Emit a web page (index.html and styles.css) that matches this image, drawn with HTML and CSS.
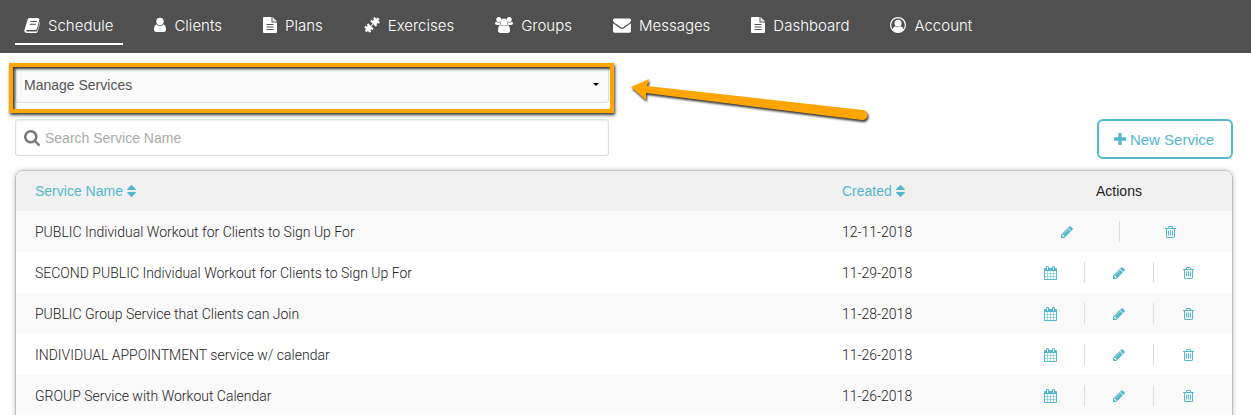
FILE: index.html
```html
<!DOCTYPE html>
<html lang="en">
<head>
  <meta charset="UTF-8" />
  <meta name="viewport" content="width=device-width, initial-scale=1.0" />
  <title>Manage Services</title>
  <link rel="stylesheet" href="styles.css">
</head>
<body>
  <!-- Icon set -->
  <svg class="sprite" aria-hidden="true">
    <symbol id="i-book" viewBox="0 0 16 16">
      <path fill-rule="evenodd" d="M5.6 1h8.2q1.9.2 1.5 1.900l-2.500 9q-.3 1.100-1.500 1.100H3.200q-1 0-1.200.7.1.700 1.200.700h8.900q1 0 1.300-1l2.300-8.600q.5.600.2 1.500l-2.200 8.200q-.4 1.500-2 1.500H2.600Q.300 15.600.300 13.400L3.600 2.500Q4.100 1 5.600 1zM6.500 4l-.3 1h6.500l.3-1zm-.8 2.800-.3 1h6.500l.3-1z"/>
    </symbol>
    <symbol id="i-user" viewBox="0 0 12 16">
      <path d="M6 .8a3.700 3.700 0 0 1 3.700 3.700A3.700 3.700 0 0 1 6 8.400 3.700 3.700 0 0 1 2.300 4.500 3.700 3.700 0 0 1 6 .8zM2.600 7.400Q4 9.200 6 9.200t3.400-1.800Q12 8 12 12.500 12 15 9.800 15H2.200Q0 15 0 12.500 0 8 2.600 7.400z"/>
    </symbol>
    <symbol id="i-file" viewBox="0 0 14 16">
      <path fill-rule="evenodd" d="M1 0h7.500v5.500H14V15q0 1-1 1H1q-1 0-1-1V1q0-1 1-1zM3.500 7v1h7V7zm0 2.500v1h7v-1zm0 2.500v1h7v-1z"/>
      <path d="M9.500 0 14 4.500H9.500z"/>
    </symbol>
    <symbol id="i-dumbbell" viewBox="0 0 14 14">
      <path d="M8 1.200 9.200 0l1.600 1.500L12 .4 13.600 2l-1.100 1.200L14 4.800 12.800 6l-.9-.8-1.100 1.100.8.900-1.300 1.300-2.100-2.100-1.800 1.800 2.100 2.100-1.300 1.300-.9-.8-.8.800.8.900L5 13.800l-1.600-1.600-1.200 1.100L.6 11.800l1.200-1.200L.2 9l1.300-1.300.9.8.8-.8-.8-.9 1.300-1.300 2.100 2.100 1.800-1.800-2.100-2.100L6.800 2.400l.9.900 1.100-1.200z"/>
    </symbol>
    <symbol id="i-group" viewBox="0 0 18 16">
      <circle cx="3.800" cy="2.500" r="2.500"/>
      <circle cx="14.200" cy="2.500" r="2.500"/>
      <circle cx="9" cy="5.200" r="3.600"/>
      <path d="M1.500 4.700Q3 6 4.800 5.300 4.900 7 5.700 8H3.500Q0 8.200 0 6.500q0-1.700 1.500-1.800zM16.500 4.700Q15 6 13.200 5.300 13.100 7 12.300 8h2.200Q18 8.200 18 6.500q0-1.700-1.500-1.800zM5.600 8q1.500 1.300 3.400 1.300T12.400 8Q15 8.600 15 13.300 15 16 12.500 16h-7Q3 16 3 13.300 3 8.600 5.600 8z"/>
    </symbol>
    <symbol id="i-envelope" viewBox="0 128 1792 1536">
      <path d="M1792 710v794q0 66-47 113t-113 47h-1472q-66 0-113-47t-47-113v-794q44 49 101 87 362 246 497 345 57 42 92.500 65.500t94.500 48 110 24.500h2q51 0 110-24.500t94.500-48 92.500-65.500q170-123 498-345 57-39 100-87zm0-294q0 79-49 151t-122 123q-376 261-468 325-10 7-42.500 31t-54 38.500-52 32.500-57.500 27-50 9h-2q-23 0-50-9t-57.500-27-52-32.500-54-38.500-42.500-31q-91-64-262-182.500t-205-142.500q-62-42-117-115.500t-55-136.500q0-78 41.500-130t118.500-52h1472q65 0 112.500 47t47.500 113z"/>
    </symbol>
    <symbol id="i-account" viewBox="0 0 16 16">
      <circle cx="8" cy="8" r="7.400" fill="none" stroke="currentColor" stroke-width="1.200"/>
      <circle cx="8" cy="6.300" r="3.500"/>
      <path d="M5.200 9.200Q8 11.400 10.800 9.200q2.200.6 2.600 3.200Q11.400 15.300 8 15.300T2.600 12.400Q3 9.800 5.200 9.200z"/>
    </symbol>
    <symbol id="i-search" viewBox="64 128 1664 1664">
      <path d="M1216 832q0-185-131.500-316.500t-316.500-131.500-316.500 131.500-131.500 316.500 131.500 316.500 316.500 131.500 316.500-131.500 131.500-316.500zm512 832q0 52-38 90t-90 38q-54 0-90-38l-343-342q-179 124-399 124-143 0-273.500-55.500t-225-150-150-225-55.500-273.500 55.500-273.500 150-225 225-150 273.500-55.500 273.500 55.500 225 150 150 225 55.500 273.500q0 220-124 399l343 343q37 37 37 90z"/>
    </symbol>
    <symbol id="i-plus" viewBox="192 128 1408 1408">
      <path d="M1600 736v192q0 40-28 68t-68 28h-416v416q0 40-28 68t-68 28h-192q-40 0-68-28t-28-68v-416h-416q-40 0-68-28t-28-68v-192q0-40 28-68t68-28h416v-416q0-40 28-68t68-28h192q40 0 68 28t28 68v416h416q40 0 68 28t28 68z"/>
    </symbol>
    <symbol id="i-sort" viewBox="384 192 1024 1408">
      <path d="M1408 1088q0 26-19 45l-448 448q-19 19-45 19t-45-19l-448-448q-19-19-19-45t19-45 45-19h896q26 0 45 19t19 45zm0-384q0 26-19 45t-45 19h-896q-26 0-45-19t-19-45 19-45l448-448q19-19 45-19t45 19l448 448q19 19 19 45z"/>
    </symbol>
    <symbol id="i-calendar" viewBox="64 0 1664 1792">
      <path d="M192 1664h288v-288h-288v288zm352 0h320v-288h-320v288zm-352-352h288v-320h-288v320zm352 0h320v-320h-320v320zm-352-384h288v-288h-288v288zm736 736h320v-288h-320v288zm-384-736h320v-288h-320v288zm768 736h288v-288h-288v288zm-384-352h320v-320h-320v320zm-352-864v-288q0-13-9.500-22.500t-22.500-9.500h-64q-13 0-22.500 9.500t-9.500 22.500v288q0 13 9.500 22.500t22.500 9.500h64q13 0 22.500-9.500t9.500-22.500zm736 864h288v-320h-288v320zm-384-384h320v-288h-320v288zm384 0h288v-288h-288v288zm32-480v-288q0-13-9.500-22.500t-22.500-9.500h-64q-13 0-22.500 9.500t-9.500 22.500v288q0 13 9.500 22.500t22.500 9.500h64q13 0 22.500-9.500t9.500-22.500zm384-64v1280q0 52-38 90t-90 38h-1408q-52 0-90-38t-38-90v-1280q0-52 38-90t90-38h128v-96q0-66 47-113t113-47h64q66 0 113 47t47 113v96h384v-96q0-66 47-113t113-47h64q66 0 113 47t47 113v96h128q52 0 90 38t38 90z"/>
    </symbol>
    <symbol id="i-pencil" viewBox="128 128 1536 1536">
      <path d="M491 1536l91-91-235-235-91 91v107h128v128h107zm523-928q0-22-22-22-10 0-17 7l-542 542q-7 7-7 17 0 22 22 22 10 0 17-7l542-542q7-7 7-17zm-54-192l416 416-832 832h-416v-416zm683 96q0 53-37 90l-166 166-416-416 166-165q36-38 90-38 53 0 91 38l235 234q37 39 37 91z"/>
    </symbol>
    <symbol id="i-trash" viewBox="192 128 1408 1536">
      <path d="M704 736v576q0 14-9 23t-23 9h-64q-14 0-23-9t-9-23v-576q0-14 9-23t23-9h64q14 0 23 9t9 23zm256 0v576q0 14-9 23t-23 9h-64q-14 0-23-9t-9-23v-576q0-14 9-23t23-9h64q14 0 23 9t9 23zm256 0v576q0 14-9 23t-23 9h-64q-14 0-23-9t-9-23v-576q0-14 9-23t23-9h64q14 0 23 9t9 23zm128 724v-948h-896v948q0 22 7 40.500t14.500 27 10.500 8.500h832q3 0 10.500-8.500t14.500-27 7-40.500zm-672-1076h448l-48-117q-7-9-17-11h-317q-10 2-17 11zm928 32v64q0 14-9 23t-23 9h-96v948q0 83-47 143.500t-113 60.500h-832q-66 0-113-58.500t-47-141.500v-952h-96q-14 0-23-9t-9-23v-64q0-14 9-23t23-9h309l70-167q15-37 54-63t79-26h320q40 0 79 26t54 63l70 167h309q14 0 23 9t9 23z"/>
    </symbol>
  </svg>

  <nav class="navbar">
    <a class="nav-link active" href="#"><svg class="icon-16"><use href="#i-book"/></svg>Schedule</a>
    <a class="nav-link" href="#"><svg class="icon-12"><use href="#i-user"/></svg>Clients</a>
    <a class="nav-link" href="#"><svg class="icon-14"><use href="#i-file"/></svg>Plans</a>
    <a class="nav-link" href="#"><svg class="icon-16"><use href="#i-dumbbell"/></svg>Exercises</a>
    <a class="nav-link" href="#"><svg class="icon-18"><use href="#i-group"/></svg>Groups</a>
    <a class="nav-link" href="#"><svg class="icon-18"><use href="#i-envelope"/></svg>Messages</a>
    <a class="nav-link" href="#"><svg class="icon-14"><use href="#i-file"/></svg>Dashboard</a>
    <a class="nav-link" href="#"><svg class="icon-16"><use href="#i-account"/></svg>Account</a>
  </nav>

  <main class="content">
    <div class="view-picker">
      <select class="view-select" aria-label="View">
        <option>Manage Services</option>
      </select>
      <svg class="caret" viewBox="0 0 6 3"><path d="M0 0h6L3 3z"/></svg>
      <div class="highlight"></div>
      <svg class="arrow" viewBox="0 0 244 50">
        <path d="M2 12 20 4l-2 7 216 24a5 5 0 0 1-1 10L17 18v7z"/>
      </svg>
    </div>

    <div class="toolbar">
      <div class="search">
        <svg class="search-icon"><use href="#i-search"/></svg>
        <input class="search-input" type="text" placeholder="Search Service Name" aria-label="Search Service Name">
      </div>
      <button class="new-btn" type="button"><svg><use href="#i-plus"/></svg>New Service</button>
    </div>

    <div class="table-box">
      <table class="services">
        <thead>
          <tr>
            <th><a href="#">Service Name <svg><use href="#i-sort"/></svg></a></th>
            <th class="col-date"><a href="#">Created <svg><use href="#i-sort"/></svg></a></th>
            <th class="col-actions">Actions</th>
          </tr>
        </thead>
        <tbody>
          <tr>
            <td>PUBLIC Individual Workout for Clients to Sign Up For</td>
            <td>12-11-2018</td>
            <td>
              <div class="actions">
                <button aria-label="Edit"><svg class="icon-12"><use href="#i-pencil"/></svg></button>
                <button aria-label="Delete"><svg class="icon-11"><use href="#i-trash"/></svg></button>
              </div>
            </td>
          </tr>
          <tr>
            <td>SECOND PUBLIC Individual Workout for Clients to Sign Up For</td>
            <td>11-29-2018</td>
            <td>
              <div class="actions">
                <button aria-label="Calendar"><svg class="icon-13"><use href="#i-calendar"/></svg></button>
                <button aria-label="Edit"><svg class="icon-12"><use href="#i-pencil"/></svg></button>
                <button aria-label="Delete"><svg class="icon-11"><use href="#i-trash"/></svg></button>
              </div>
            </td>
          </tr>
          <tr>
            <td>PUBLIC Group Service that Clients can Join</td>
            <td>11-28-2018</td>
            <td>
              <div class="actions">
                <button aria-label="Calendar"><svg class="icon-13"><use href="#i-calendar"/></svg></button>
                <button aria-label="Edit"><svg class="icon-12"><use href="#i-pencil"/></svg></button>
                <button aria-label="Delete"><svg class="icon-11"><use href="#i-trash"/></svg></button>
              </div>
            </td>
          </tr>
          <tr>
            <td>INDIVIDUAL APPOINTMENT service w/ calendar</td>
            <td>11-26-2018</td>
            <td>
              <div class="actions">
                <button aria-label="Calendar"><svg class="icon-13"><use href="#i-calendar"/></svg></button>
                <button aria-label="Edit"><svg class="icon-12"><use href="#i-pencil"/></svg></button>
                <button aria-label="Delete"><svg class="icon-11"><use href="#i-trash"/></svg></button>
              </div>
            </td>
          </tr>
          <tr>
            <td>GROUP Service with Workout Calendar</td>
            <td>11-26-2018</td>
            <td>
              <div class="actions">
                <button aria-label="Calendar"><svg class="icon-13"><use href="#i-calendar"/></svg></button>
                <button aria-label="Edit"><svg class="icon-12"><use href="#i-pencil"/></svg></button>
                <button aria-label="Delete"><svg class="icon-11"><use href="#i-trash"/></svg></button>
              </div>
            </td>
          </tr>
        </tbody>
      </table>
    </div>
  </main>
</body>
</html>
```
FILE: styles.css
```css
* {
  box-sizing: border-box;
}

body {
  margin: 0;
  font-family: Roboto, "Liberation Sans", sans-serif;
  font-size: 14px;
  font-weight: 300;
  line-height: 20px;
  color: #222;
  background: #fff;
  overflow: hidden;
}

.sprite {
  display: none;
}

svg {
  fill: currentColor;
}

.icon-11 { width: 11px; height: 12px; }
.icon-12 { width: 12px; height: 12px; }
.icon-13 { width: 13px; height: 14px; }
.icon-14 { width: 14px; height: 16px; }
.icon-16 { width: 16px; height: 16px; }
.icon-18 { width: 18px; height: 16px; }

/* Top navigation */
.navbar {
  display: flex;
  gap: 22px;
  padding: 8px 15px;
  background: #505050;
}

.nav-link {
  display: flex;
  align-items: center;
  gap: 8px;
  height: 37px;
  padding: 0 10px 0 9px;
  border-bottom: 2px solid transparent;
  color: #fff;
  font-family: Inter, "Liberation Sans", sans-serif;
  font-size: 15px;
  text-decoration: none;
}

.nav-link.active {
  border-bottom-color: #fff;
}

.nav-link svg {
  height: 16px;
  margin-bottom: 2px;
}

.nav-link [href="#i-dumbbell"] {
  transform-origin: center;
}

.content {
  padding: 14px 18px 0 15px;
}

/* View drop-down */
.view-picker {
  position: relative;
  width: calc(50% - 15px);
}

.view-select {
  display: block;
  width: 100%;
  height: 36px;
  padding: 0 8px;
  appearance: none;
  border: 1px solid #ddd;
  border-radius: 3px;
  background: #fafafa;
  font-family: "Liberation Sans", sans-serif;
  font-size: 14px;
  color: #555;
}

.caret {
  position: absolute;
  top: 16px;
  right: 10px;
  width: 6px;
  height: 3px;
  fill: #000;
}

.highlight {
  position: absolute;
  inset: -4px -5px -10px -6px;
  border: 4px solid #ffa500;
  box-shadow: 1px 2px 3px rgba(0, 0, 0, 0.8), inset 2px 2px 3px rgba(0, 0, 0, 0.8);
  pointer-events: none;
}

.arrow {
  position: absolute;
  top: 8px;
  left: calc(100% + 20px);
  width: 244px;
  height: 50px;
  fill: #ffa500;
  filter: drop-shadow(1px 2px 1px rgba(0, 0, 0, 0.8));
}

/* Search and new service */
.toolbar {
  display: flex;
  justify-content: space-between;
  align-items: flex-start;
  margin: 16px 0 11px;
}

.search {
  position: relative;
  width: calc(50% - 15px);
}

.search-icon {
  position: absolute;
  top: 11px;
  left: 9px;
  width: 16px;
  height: 16px;
  color: #777;
}

.search-input {
  display: block;
  width: 100%;
  height: 37px;
  padding: 0 10px 0 29px;
  border: 1px solid #ddd;
  border-radius: 3px;
  box-shadow: inset 0 1px 2px rgba(0, 0, 0, 0.08);
  font-family: "Liberation Sans", sans-serif;
  font-size: 14px;
}

.search-input::placeholder {
  color: #aaa;
}

.new-btn {
  display: flex;
  align-items: center;
  justify-content: center;
  gap: 4px;
  width: 136px;
  height: 40px;
  padding: 0 2px 0 0;
  border: 2px solid #53b8cd;
  border-radius: 6px;
  background: #fff;
  color: #53b8cd;
  font-family: "Liberation Sans", sans-serif;
  font-size: 15px;
}

.new-btn svg {
  width: 12px;
  height: 12px;
}

/* Services table */
.table-box {
  border: 1px solid #bbc1c6;
  border-radius: 8px 8px 0 0;
  box-shadow: 0 0 4px rgba(0, 0, 0, 0.25);
  overflow: hidden;
}

.services {
  width: 100%;
  border-collapse: collapse;
  table-layout: fixed;
}

.services th,
.services td {
  height: 41px;
  padding: 0 10px 0 19px;
  text-align: left;
}

.services th {
  height: 40px;
  background: #f1f1f1;
  font-family: "Liberation Sans", sans-serif;
  font-weight: 400;
}

.services th a {
  color: #53b8cd;
  text-decoration: none;
}

.services th svg {
  width: 9px;
  height: 12px;
  vertical-align: -1px;
}

.services tbody tr:nth-child(odd) {
  background: #f9f9f9;
}

.services .col-date {
  width: 164px;
}

.services .col-actions {
  width: 226px;
  padding-left: 10px;
  text-align: center;
}

.services td:last-child {
  padding-left: 10px;
}

.services td:nth-child(2),
.services .col-date {
  padding-left: 0;
}

.actions {
  display: flex;
}

.actions button {
  display: flex;
  flex: 1;
  align-items: center;
  justify-content: center;
  height: 21px;
  padding: 0;
  border: 0;
  background: none;
  color: #53b8cd;
}

.actions button + button {
  border-left: 1px solid #ddd;
}
```
